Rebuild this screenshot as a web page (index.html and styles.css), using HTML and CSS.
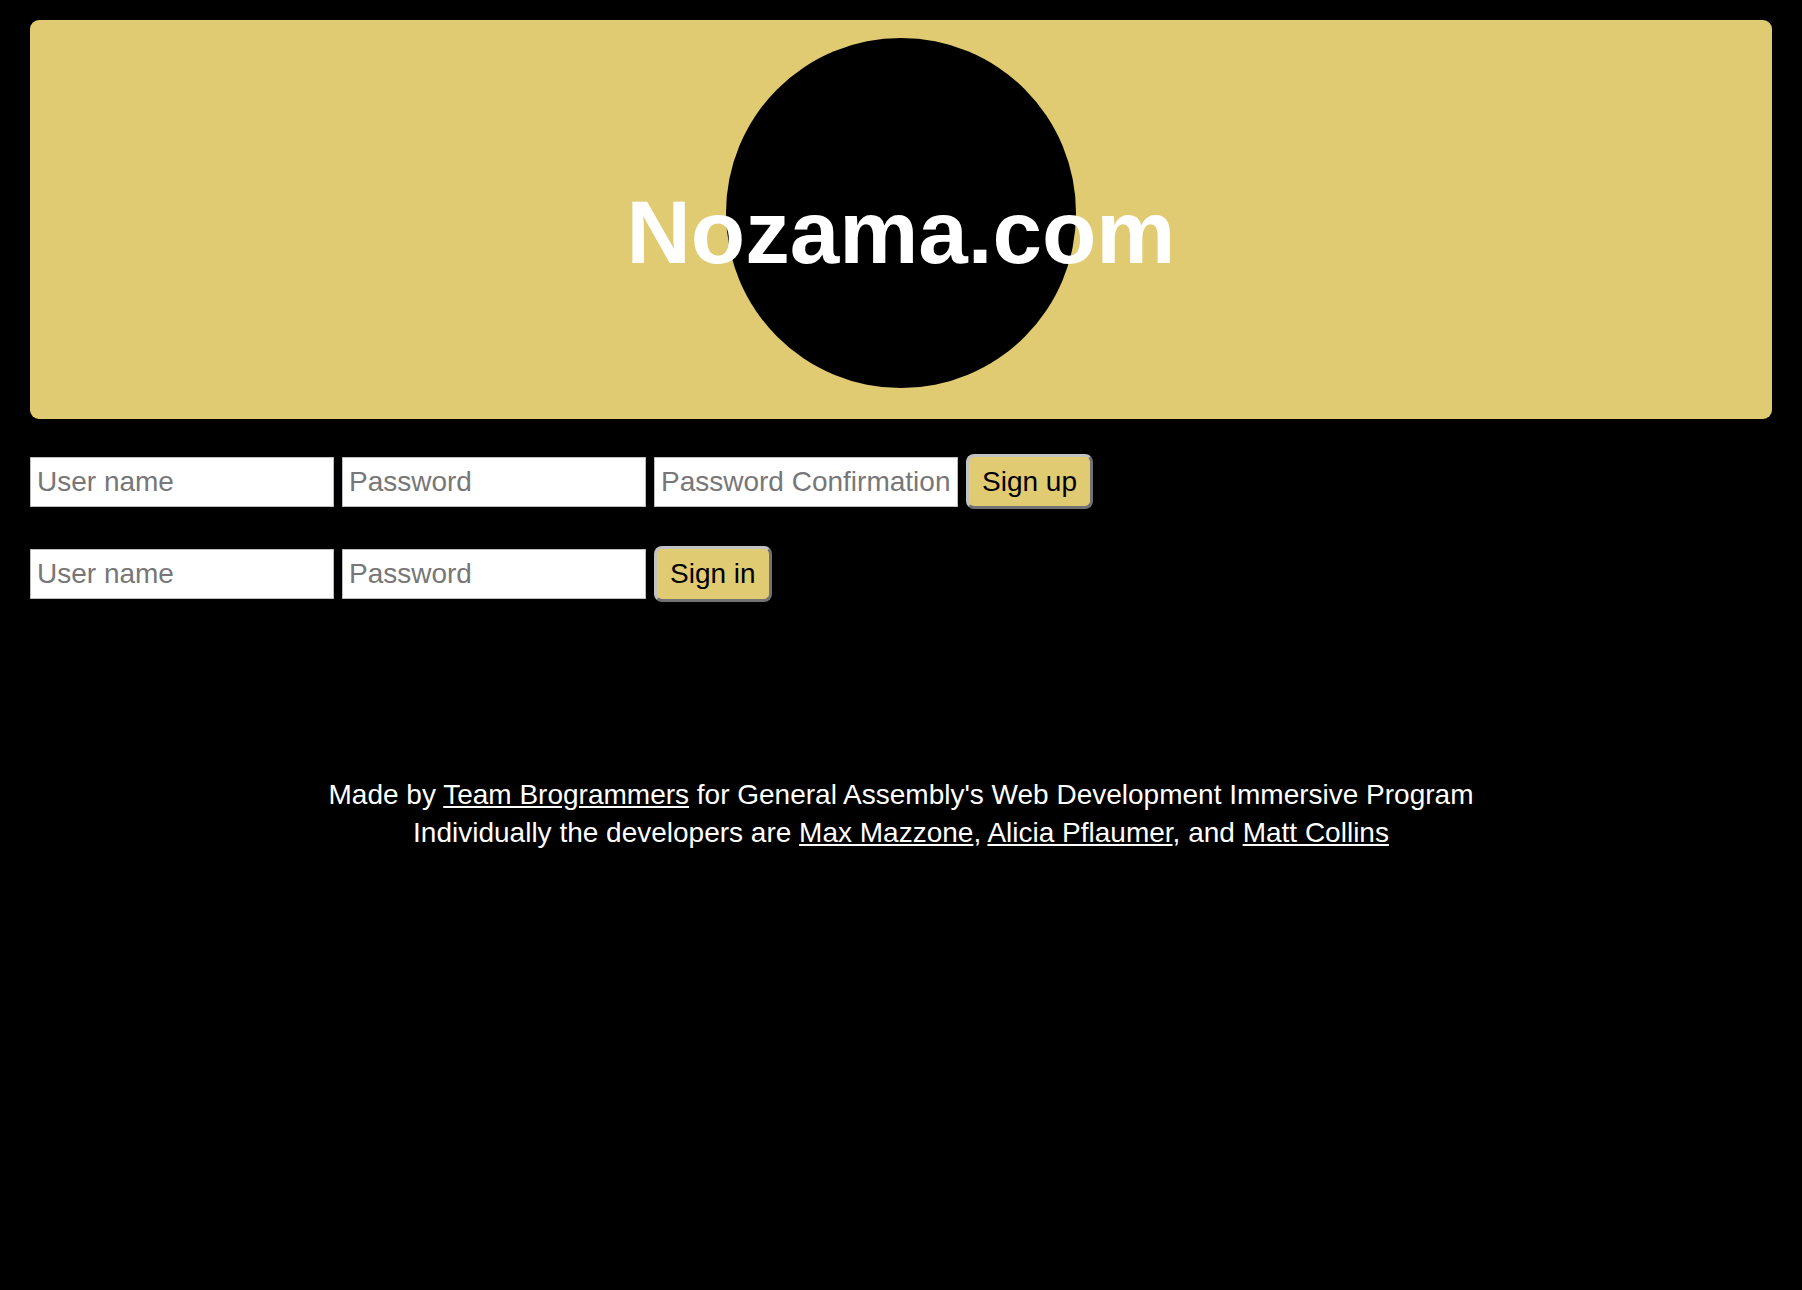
FILE: index.html
```html
<!DOCTYPE html>
<html lang="en">
<head>
<meta charset="utf-8">
<title>Nozama.com</title>
<link rel="stylesheet" href="styles.css">
</head>
<body>
<div class="page">
  <header class="banner">
    <div class="logo-circle"></div>
    <h1 class="title">Nozama.com</h1>
  </header>

  <form class="auth-form sign-up">
    <input class="field" type="text" placeholder="User name">
    <input class="field" type="password" placeholder="Password">
    <input class="field" type="password" placeholder="Password Confirmation">
    <button class="btn" type="button">Sign up</button>
  </form>

  <form class="auth-form sign-in">
    <input class="field" type="text" placeholder="User name">
    <input class="field" type="password" placeholder="Password">
    <button class="btn" type="button">Sign in</button>
  </form>

  <footer class="credits">
    <p>Made by <a href="#">Team Brogrammers</a> for General Assembly's Web Development Immersive Program</p>
    <p>Individually the developers are <a href="#">Max Mazzone</a>, <a href="#">Alicia Pflaumer</a>, and <a href="#">Matt Collins</a></p>
  </footer>
</div>
</body>
</html>
```

FILE: styles.css
```css
html, body {
  margin: 0;
  padding: 0;
  background: #000;
}

body {
  font-family: "Liberation Sans", Arial, Helvetica, sans-serif;
  color: #fff;
}

.page {
  padding: 20px 30px;
}

.banner {
  background: #e1cb72;
  border-radius: 9px;
  height: 399px;
  box-sizing: border-box;
  padding-top: 18px;
  display: grid;
  justify-items: center;
  align-items: start;
}

.logo-circle {
  grid-area: 1 / 1;
  width: 350px;
  height: 350px;
  border-radius: 50%;
  background: #000;
}

.title {
  grid-area: 1 / 1;
  margin: 150px 0 0;
  font-size: 89px;
  line-height: 88px;
  font-weight: bold;
  color: #fff;
  z-index: 1;
}

.auth-form {
  display: flex;
  align-items: center;
  gap: 8px;
  margin: 0;
}

.sign-up {
  margin-top: 35px;
}

.sign-in {
  margin-top: 37px;
}

.field {
  width: 304px;
  height: 50px;
  box-sizing: border-box;
  border: 1px solid #bcbcbc;
  background: #fff;
  padding: 0 6px;
  font-family: "Liberation Sans", Arial, Helvetica, sans-serif;
  font-size: 28px;
  color: #222;
  outline: none;
}

.field::placeholder {
  color: #777;
  opacity: 1;
}

.btn {
  height: 55px;
  box-sizing: border-box;
  padding: 0 13px;
  background: #e1cb72;
  border: 3px solid;
  border-color: #c2c2c2 #727272 #727272 #c2c2c2;
  border-radius: 8px;
  font-family: "Liberation Sans", Arial, Helvetica, sans-serif;
  font-size: 28px;
  color: #000;
  cursor: pointer;
}

.sign-in .btn {
  height: 56px;
}

.credits {
  margin-top: 174px;
  text-align: center;
  font-size: 28px;
  line-height: 38px;
}

.credits p {
  margin: 0;
}

.credits a {
  color: #fff;
  text-decoration: underline;
}
```
